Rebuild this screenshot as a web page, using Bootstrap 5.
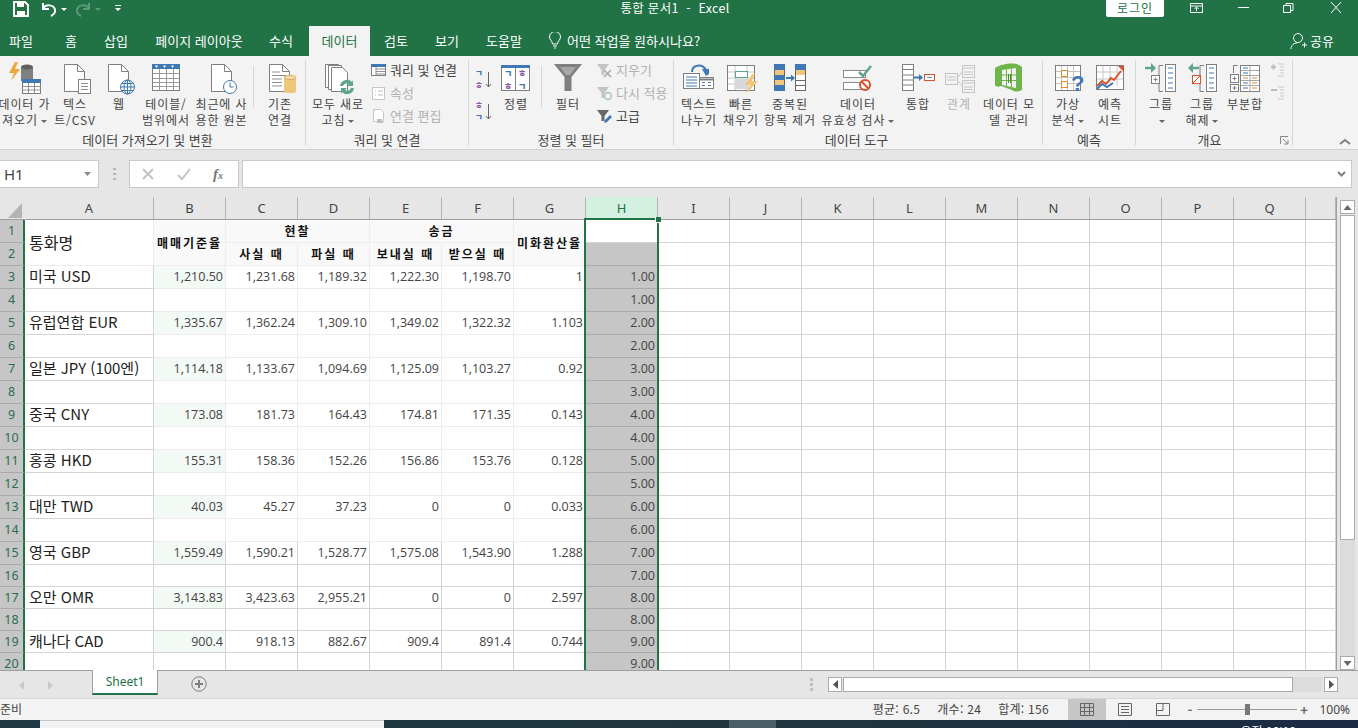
<!DOCTYPE html>
<html lang="ko">
<head>
    <meta charset="UTF-8">
    <meta name="viewport" content="width=device-width, initial-scale=1.0">
    <title>통합 문서1 - Excel</title>
    <link href="https://cdn.jsdelivr.net/npm/bootstrap@5.3.0/dist/css/bootstrap.min.css" rel="stylesheet">
    <style>
        html, body { height: 100%; }
        body { width: 1358px; height: 728px; overflow: hidden; background: #e6e6e6; color: #444; font-family: "Noto Sans CJK KR", "Noto Sans", sans-serif; font-size: 13px; }

        /* title bar + tabs */
        .xl-top { background: #217346; height: 56px; color: #fff; }
        .xl-title-row { height: 26px; display: grid; grid-template-columns: 400px 550px 1fr; }
        .xl-title { text-align: center; line-height: 16px; font-size: 12.5px; letter-spacing: .3px; }
        .xl-qat { display: flex; align-items: flex-start; padding: 1px 0 0 12px; gap: 0; }
        .q-gap { margin-left: 10px; }
        .xl-login { width: 58px; height: 17px; background: #fff; color: #217346; text-align: center; line-height: 15px; font-size: 12px; border-radius: 0 0 2px 2px; letter-spacing: 1px; margin-left: 156px; }
        .xl-win { display: flex; align-items: flex-start; }
        .xl-win svg { display: block; }
        .w-gap { margin-left: 10px; }
        .xl-tabs { display: flex; height: 30px; line-height: 30px; position: relative; }
        .xl-tab { text-align: center; white-space: nowrap; }
        .xl-tab.on { background: #f3f3f3; color: #217346; margin-left: 13px; }
        .xl-tell { display: flex; align-items: center; gap: 5px; margin-left: 12px; }
        .xl-share { margin-left: auto; margin-right: 24px; display: flex; align-items: center; gap: 2px; }
        .tw-30 { width: 30px; } .tw-32 { width: 32px; } .tw-42 { width: 42px; } .tw-50 { width: 50px; } .tw-52 { width: 52px; }
        .tw-58 { width: 58px; } .tw-61 { width: 61px; } .tw-64 { width: 64px; } .tw-134 { width: 134px; }

        /* ribbon */
        .xl-ribbon { height: 94px; background: #f3f3f3; border-bottom: 1px solid #d2d2d2; display: flex; padding-top: 4px; position: relative; }
        .rb-group { height: 85px; display: flex; flex-direction: column; border-right: 1px solid #d5d5d5; flex: none; position: relative; }
        .rb-body { height: 71px; display: flex; }
        .rb-label { height: 14px; line-height: 18px; text-align: center; color: #444; white-space: nowrap; }
        .rb-g1 { width: 306px; } .rb-g2 { width: 163px; padding-left: 6px; } .rb-g3 { width: 205px; padding-left: 6px; }
        .rb-g4 { width: 369px; padding-left: 3px; } .rb-g5 { width: 93px; padding-left: 3px; } .rb-g6 { width: 157px; padding-left: 5px; }
        .rb-g1 .rb-label { margin-right: 10px; }
        .rb-g2 .rb-label, .rb-g3 .rb-label, .rb-g4 .rb-label { margin-left: -6px; }
        .rb-g5 .rb-label { margin-left: -3px; }
        .rb-g6 .rb-label { margin-left: -5px; margin-right: 9px; }
        .rb-btn { flex: none; display: flex; flex-direction: column; align-items: center; text-align: center; font-size: 12px; letter-spacing: .9px; line-height: 16px; white-space: nowrap; }
        .rb-btn svg { display: block; flex: none; }
        .rb-off { color: #b1b1b1; }
        .bw-36 { width: 36px; } .bw-40 { width: 40px; } .bw-42 { width: 42px; } .bw-44 { width: 44px; } .bw-48 { width: 48px; } .bw-49 { width: 49px; }
        .bw-52 { width: 52px; } .bw-53 { width: 53px; } .bw-58 { width: 58px; } .bw-60 { width: 60px; } .bw-78 { width: 78px; }
        .rb-sep { width: 1px; height: 42px; background: #d5d5d5; margin: 6px 4px 0; flex: none; }
        .rb-sep-wide { margin: 6px 2px 0 5px; }
        .rb-small { display: flex; flex-direction: column; margin: -2px 0 0 6px; }
        .rb-small-row { height: 23px; display: flex; align-items: center; gap: 3px; white-space: nowrap; }
        .rb-small-row svg { flex: none; display: block; }
        .rb-caret { display: inline-block; width: 0; height: 0; border: 3px solid transparent; border-top-color: #666; border-bottom: 0; vertical-align: 2px; margin-left: 3px; }
        .rb-sort { width: 20px; display: flex; flex-direction: column; gap: 6px; padding-top: 5px; }
        .rb-sort svg { display: block; }
        .rb-outline { display: flex; flex-direction: column; gap: 7px; margin-left: 3px; padding-top: 2px; }
        .rb-launch { position: absolute; right: 3px; bottom: 0; }
        .rb-collapse { position: absolute; right: 7px; bottom: 3px; }

        /* formula bar */
        .xl-fbar { height: 47px; display: flex; padding-top: 10px; }
        .fb-box { height: 28px; background: #fff; border: 1px solid #c9c9c9; flex: none; display: flex; align-items: center; }
        .fb-name { width: 99px; padding: 0 6px 0 4px; justify-content: space-between; font-size: 15px; font-family: "Noto Sans", sans-serif; border-left: 0; }
        .fb-dots { width: 30px; flex: none; display: flex; justify-content: center; padding-top: 7px; }
        .fb-func { width: 110px; gap: 21px; padding-left: 11px; }
        .fb-fx { font-family: "Liberation Serif", serif; font-style: italic; font-weight: 700; font-size: 15px; color: #777; }
        .fb-fx sub { font-size: 10px; bottom: 0; }
        .fb-input { width: 1110px; margin-left: 3px; justify-content: flex-end; padding-right: 4px; }

        /* sheet */
        .xl-sheetrow { height: 473px; display: flex; }
        .xl-sheet { width: 1337px; height: 473px; overflow: hidden; position: relative; border-right: 1px solid #9e9e9e; flex: none; }
        .gridtbl { border-collapse: separate; border-spacing: 0; table-layout: fixed; width: 1336px; background: #fff; }
        .gridtbl th, .gridtbl td { padding: 0; line-height: 18px; border-right: 1px solid #d4d4d4; border-bottom: 1px solid #d4d4d4; overflow: hidden; white-space: nowrap; }
        .gridtbl tr { height: 23px; }
        .gridtbl tr.low { height: 22px; }
        .gridtbl thead th { background: #e6e6e6; font-weight: 400; text-align: center; font-size: 13px; font-family: "Noto Sans", sans-serif; border-right: 1px solid #b4b4b4; border-bottom: 1px solid #9e9e9e; color: #444; height: 23px; }
        .gridtbl thead th.sel { background: #d3f0e0; color: #217346; }
        .gridtbl thead th.corner { position: relative; border-right-color: #e6e6e6; }
        .rowh { background: #c6c6c6 !important; color: #2b6d50; text-align: center; font-weight: 400; font-size: 12.5px; border-right: 2px solid #217346 !important; border-bottom-color: #a9a9a9 !important; font-family: "Noto Sans", sans-serif; }
        .cell-a { font-size: 15px; padding: 0 0 2px 4px !important; color: #222; }
        .cell-a1 { font-size: 16px; }
        .cell-n { font-size: 12.5px; text-align: right; padding-right: 2px !important; color: #444; font-family: "Open Sans", "Noto Sans", sans-serif; }
        .cell-base { background: #f3f9f5; }
        .cell-lt { border-color: #ededed !important; }
        .cell-hd { background: #f9f9f9; font-weight: 700; font-size: 12px; color: #111; text-align: center; letter-spacing: 2px; border-color: #ededed !important; }
        .cell-h { background: #c6c6c6; border-color: #a9a9a9 !important; }
        .cell-h1 { background: #fff; }
        .sel-frame { position: absolute; left: 584px; top: 21px; width: 75px; height: 470px; border: 2px solid #217346; pointer-events: none; }
        .sel-grip { position: absolute; left: 655px; top: 20px; width: 6px; height: 6px; background: #217346; border: 1px solid #fff; border-top: 0; border-right: 0; }

        .xl-vbar { width: 15px; margin-left: 3px; display: flex; flex-direction: column; padding-top: 3px; flex: none; }
        .sb-btn { width: 15px; height: 14px; background: #fff; border: 1px solid #ababab; display: flex; align-items: center; justify-content: center; flex: none; }
        .sb-thumb { background: #fff; border: 1px solid #ababab; flex: none; }
        .xl-vbar .sb-thumb { height: 325px; margin-top: 1px; }
        .sb-track { background: #dcdcdc; flex: 1 1 auto; }

        /* tabs + status */
        .xl-sheettabs { height: 28px; border-top: 1px solid #9e9e9e; display: flex; align-items: flex-start; }
        .st-nav { width: 92px; flex: none; display: flex; gap: 22px; padding: 10px 0 0 19px; }
        .st-tab { width: 66px; height: 25px; margin-top: -1px; background: #fff; border: 1px solid #9e9e9e; border-top: 0; border-bottom: 2px solid #217346; color: #217346; text-align: center; line-height: 23px; font-family: "Noto Sans", sans-serif; font-size: 12px; flex: none; }
        .st-add { margin-left: 33px; margin-top: 5px; flex: none; }
        .st-right { margin-left: auto; display: flex; align-items: center; height: 28px; padding-bottom: 2px; }
        .st-grip { width: 3px; margin-right: 15px; display: flex; flex-direction: column; gap: 2px; }
        .st-grip i { display: block; width: 3px; height: 3px; background: #c0c0c0; }
        .h-bar { display: flex; width: 510px; height: 15px; margin-right: 20px; }
        .h-bar .sb-btn { width: 14px; height: 15px; }
        .h-bar .sb-thumb { width: 450px; height: 15px; margin-left: 1px; }
        .h-bar .sb-track { height: 15px; margin-right: 2px; }

        .xl-status { height: 22px; background: #f3f3f3; border-top: 1px solid #d6d6d6; display: flex; align-items: center; line-height: 20px; font-size: 12px; }
        .xl-ready { font-size: 12px; padding-bottom: 1px; }
        .xl-stats { margin-left: auto; display: flex; gap: 17px; letter-spacing: .3px; padding-bottom: 1px; }
        .vw-box { height: 21px; width: 38px; display: flex; align-items: center; justify-content: center; flex: none; }
        .vw-on { background: #c6c6c6; margin-left: 19px; }
        .zm { display: flex; align-items: center; margin-left: 4px; }
        .zm-line { width: 100px; height: 1px; background: #9a9a9a; position: relative; margin: 0 3px; }
        .zm-line i { position: absolute; left: 48px; top: -5px; width: 5px; height: 11px; background: #777; }
        .zm-sign { color: #666; font-weight: 700; width: 8px; text-align: center; font-size: 13px; }
        .zm-val { width: 50px; text-align: right; padding-right: 8px; font-family: "Noto Sans", sans-serif; }

        /* task bar */
        .xl-task { height: 8px; background: linear-gradient(90deg, #1f3a44, #20363f 55%, #1a2a44); display: flex; overflow: hidden; color: #fff; position: relative; }
        .tk-search { width: 344px; margin-left: 40px; background: #f2f2f2; border-top: 1px solid #c4c4c4; flex: none; }
        .tk-app { width: 47px; margin-left: 345px; background: #4a5f68; flex: none; }
        .tk-clock { margin-left: auto; margin-right: 62px; line-height: 20px; padding-top: 1px; font-size: 12px; }
    </style>
</head>
<body>
    <!-- title bar and ribbon tabs -->
    <div class="xl-top">
        <div class="xl-title-row">
            <div class="xl-qat">
                <svg width="18" height="16" viewBox="0 0 18 16"><path d="M2 1h11l3 3v11H2z" fill="none" stroke="#fff" stroke-width="2"/><rect x="5" y="1" width="7" height="5" fill="#fff"/><rect x="5" y="10" width="8" height="5" fill="#fff"/></svg>
                <svg class="q-gap" width="18" height="16" viewBox="0 0 18 16"><path d="M3 2v6h6M3 8c2-5 11-5 12 1 .4 3-2 5-4 6" fill="none" stroke="#fff" stroke-width="2"/></svg>
                <svg width="12" height="16" viewBox="0 0 12 16"><path d="M3 7h6l-3 3z" fill="#fff"/></svg>
                <svg class="ms-1" width="18" height="16" viewBox="0 0 18 16"><path d="M15 2v6H9M15 8C13 3 4 3 3 9c-.4 3 2 5 4 6" fill="none" stroke="#5c9a7c" stroke-width="2"/></svg>
                <svg width="12" height="16" viewBox="0 0 12 16"><path d="M3 7h6l-3 3z" fill="#5c9a7c"/></svg>
                <svg class="ms-2" width="12" height="16" viewBox="0 0 12 16"><path d="M3 4h6v1H3zM3 7h6L6 10z" fill="#fff"/></svg>
            </div>
            <div class="xl-title">통합 문서1 &nbsp;-&nbsp; Excel</div>
            <div class="xl-win">
                <div class="xl-login">로그인</div>
                <svg class="w-gap" width="47" height="16" viewBox="0 0 47 16"><path d="M16.500 3.500h12v9h-12zM17 6h11M22.500 11V7.500M20.500 9l2-2 2 2" fill="none" stroke="#fff"/></svg>
                <svg width="46" height="16" viewBox="0 0 46 16"><path d="M17 7.500h11" stroke="#fff"/></svg>
                <svg width="46" height="16" viewBox="0 0 46 16"><path d="M16.500 5.500h7v7h-7zM19 5V3.500h7v7h-2" fill="none" stroke="#fff"/></svg>
                <svg width="46" height="16" viewBox="0 0 46 16"><path d="M18 2l10 11M28 2L18 13" stroke="#fff" fill="none"/></svg>
            </div>
        </div>
        <div class="xl-tabs">
            <div class="xl-tab tw-42">파일</div>
            <div class="xl-tab tw-58">홈</div>
            <div class="xl-tab tw-32">삽입</div>
            <div class="xl-tab tw-134">페이지 레이아웃</div>
            <div class="xl-tab tw-30">수식</div>
            <div class="xl-tab tw-61 on">데이터</div>
            <div class="xl-tab tw-52">검토</div>
            <div class="xl-tab tw-50">보기</div>
            <div class="xl-tab tw-64">도움말</div>
            <div class="xl-tell">
                <svg width="14" height="18" viewBox="0 0 14 18"><path d="M4.500 12c0-3-3-4-3-7a5.500 5.500 0 0 1 11 0c0 3-3 4-3 7zM5 14h4M6 16h2" fill="none" stroke="#fff"/></svg>
                <span>어떤 작업을 원하시나요?</span>
            </div>
            <div class="xl-share">
                <svg width="18" height="18" viewBox="0 0 18 18"><circle cx="8" cy="6" r="4.500" fill="none" stroke="#fff"/><path d="M1 17c0-4 3-6 6-6M12 13h5M14.500 10.500v5" fill="none" stroke="#fff"/></svg>
                <span>공유</span>
            </div>
        </div>
    </div>

    <!-- ribbon -->
    <div class="xl-ribbon">
        <div class="rb-group rb-g1">
            <div class="rb-body">
                <div class="rb-btn bw-49">
                    <svg width="40" height="36" viewBox="0 0 40 36"><rect x="16" y="7" width="12" height="14" fill="#808080"/><ellipse cx="22" cy="7" rx="6" ry="2.500" fill="#5f5f5f"/><path d="M10 2 4 13h5l-3 8 9-12h-5l3-7z" fill="#f0a73c"/><rect x="17.500" y="19.500" width="18" height="14" fill="#fff" stroke="#7f7f7f"/><rect x="17" y="19" width="19" height="4" fill="#3f78b5"/><path d="M23.500 23v10M29.500 23v10M18 26.500h17M18 30h17" stroke="#8f8f8f"/></svg>
                    <div>데이터 가<br>져오기<i class="rb-caret"></i></div>
                </div>
                <div class="rb-btn bw-52">
                    <svg width="40" height="36" viewBox="0 0 40 36"><path d="M9.500 4.500h13l7 7v20h-20z" fill="#fff" stroke="#7f7f7f"/><path d="M22.500 4.500v7h7" fill="none" stroke="#7f7f7f"/><rect x="23.500" y="19.500" width="12" height="14" fill="#fff" stroke="#7f7f7f"/><path d="M26 23.500h7M26 26.500h7M26 29.500h7" stroke="#8f8f8f"/></svg>
                    <div>텍스<br>트/CSV</div>
                </div>
                <div class="rb-btn bw-36">
                    <svg width="40" height="36" viewBox="0 0 40 36"><path d="M9.500 4.500h13l7 7v20h-20z" fill="#fff" stroke="#7f7f7f"/><path d="M22.500 4.500v7h7" fill="none" stroke="#7f7f7f"/><circle cx="28.500" cy="27" r="7" fill="#fff" stroke="#3f78b5"/><path d="M21.500 27h14M28.500 20v14M23 23.500h11M23 30.500h11" stroke="#3f78b5" fill="none"/><ellipse cx="28.500" cy="27" rx="3.500" ry="7" fill="none" stroke="#3f78b5"/></svg>
                    <div>웹</div>
                </div>
                <div class="rb-btn bw-58">
                    <svg width="40" height="36" viewBox="0 0 40 36"><rect x="6.500" y="4.500" width="27" height="26" fill="#fff" stroke="#7f7f7f"/><rect x="6" y="4" width="28" height="5" fill="#3f78b5"/><path d="M9 5.500h3L10.500 8zM17 5.500h3L18.500 8zM25 5.500h3L26.500 8z" fill="#fff"/><path d="M13.500 9v21M20.500 9v21M27.500 9v21M7 13.500h26M7 18.500h26M7 22.500h26M7 26.500h26" stroke="#9a9a9a"/></svg>
                    <div>테이블/<br>범위에서</div>
                </div>
                <div class="rb-btn bw-53">
                    <svg width="40" height="36" viewBox="0 0 40 36"><path d="M9.500 4.500h13l7 7v20h-20z" fill="#fff" stroke="#7f7f7f"/><path d="M22.500 4.500v7h7" fill="none" stroke="#7f7f7f"/><circle cx="28" cy="27" r="6.500" fill="#fff" stroke="#3f78b5"/><path d="M28 22.500V27h3.500" fill="none" stroke="#3f78b5"/></svg>
                    <div>최근에 사<br>용한 원본</div>
                </div>
                <div class="rb-sep rb-sep-wide"></div>
                <div class="rb-btn bw-48">
                    <svg width="40" height="36" viewBox="0 0 40 36"><path d="M9.500 4.500h13l7 7v20h-20z" fill="#fff" stroke="#7f7f7f"/><path d="M22.500 4.500v7h7" fill="none" stroke="#7f7f7f"/><path d="M12 12h8M12 15.500h14M12 19h10M12 22.500h10M12 26h10" stroke="#8f8f8f"/><rect x="24" y="17" width="12" height="16" rx="2" fill="#efc77c"/><ellipse cx="30" cy="17.500" rx="6" ry="2" fill="#f6ddac" stroke="#d9ab5c"/></svg>
                    <div>기존<br>연결</div>
                </div>
            </div>
            <div class="rb-label">데이터 가져오기 및 변환</div>
        </div>

        <div class="rb-group rb-g2">
            <div class="rb-body">
                <div class="rb-btn bw-52">
                    <svg width="40" height="36" viewBox="0 0 40 36"><path d="M7.500 4.500h13v23h-13z" fill="#fff" stroke="#7f7f7f"/><path d="M10.500 5.500h13v24h-13z" fill="#fff" stroke="#7f7f7f"/><path d="M13.500 7.500h11l5 5v19h-16z" fill="#fff" stroke="#7f7f7f"/><path d="M22 26a7 7 0 0 1 12-4l1-2v6h-6l2-2a4 4 0 0 0-6 2zM36 28a7 7 0 0 1-12 4l-1 2v-6h6l-2 2a4 4 0 0 0 6-2z" fill="#5fa58a"/></svg>
                    <div>모두 새로<br>고침<i class="rb-caret"></i></div>
                </div>
                <div class="rb-small">
                    <div class="rb-small-row"><svg width="17" height="16" viewBox="0 0 17 16"><rect x="1.500" y="2.500" width="14" height="11" fill="#fff" stroke="#7f7f7f"/><rect x="1" y="2" width="15" height="3" fill="#3f78b5"/><path d="M6 7h9M6 9.500h9M6 12h9M6 5v8" stroke="#8f8f8f"/></svg><span>쿼리 및 연결</span></div>
                    <div class="rb-small-row rb-off"><svg width="17" height="16" viewBox="0 0 17 16"><rect x="2.500" y="2.500" width="12" height="12" fill="#fff" stroke="#c6c6c6"/><path d="M5 6h1M8 6h5M5 10h1M8 10h5" stroke="#bdbdbd"/></svg><span>속성</span></div>
                    <div class="rb-small-row rb-off"><svg width="17" height="16" viewBox="0 0 17 16"><path d="M3.500 1.500h7l3 3v9h-10z" fill="#fff" stroke="#c6c6c6"/><path d="M7 12h5M7 14h6" stroke="#bdbdbd" stroke-width="2"/></svg><span>연결 편집</span></div>
                </div>
            </div>
            <div class="rb-label">쿼리 및 연결</div>
        </div>

        <div class="rb-group rb-g3">
            <div class="rb-body">
                <div class="rb-sort">
                    <svg width="18" height="26" viewBox="0 0 18 26"><text font-size="8.500" font-weight="900" x="0" y="10.500" fill="#3f78b5">ㄱ</text><text font-size="8.500" font-weight="900" x="0" y="23" fill="#8a5aa8">ㅎ</text><path d="M13.500 7v15M11 19l2.500 3 2.500-3" fill="none" stroke="#666"/></svg>
                    <svg width="18" height="26" viewBox="0 0 18 26"><text font-size="8.500" font-weight="900" x="0" y="10.500" fill="#8a5aa8">ㅎ</text><text font-size="8.500" font-weight="900" x="0" y="23" fill="#3f78b5">ㄱ</text><path d="M13.500 7v15M11 19l2.500 3 2.500-3" fill="none" stroke="#666"/></svg>
                </div>
                <div class="rb-btn bw-42">
                    <svg width="40" height="36" viewBox="0 0 40 36"><rect x="5.500" y="5.500" width="28" height="25" fill="#fff" stroke="#7f7f7f"/><rect x="5" y="5" width="29" height="3" fill="#3f78b5"/><path d="M19.500 8v22" stroke="#7f7f7f"/><text font-size="9" font-weight="900" x="8" y="16.500" fill="#3f78b5">ㄱ</text><text font-size="9" font-weight="900" x="8" y="29.500" fill="#8a5aa8">ㅎ</text><text font-size="9" font-weight="900" x="22" y="16.500" fill="#8a5aa8">ㅎ</text><text font-size="9" font-weight="900" x="22" y="29.500" fill="#3f78b5">ㄱ</text></svg>
                    <div>정렬</div>
                </div>
                <div class="rb-sep"></div>
                <div class="rb-btn bw-44">
                    <svg width="40" height="36" viewBox="0 0 40 36"><path d="M6 4h28L23.500 17v14h-7V17z" fill="#7f7f7f"/><path d="M12 7h16l-6 8h-4z" fill="#a6a6a6"/></svg>
                    <div>필터</div>
                </div>
                <div class="rb-small">
                    <div class="rb-small-row rb-off"><svg width="17" height="16" viewBox="0 0 17 16"><path d="M1 2h12L8.500 8v5h-3V8z" fill="#c4c4c4"/><path d="M8 8l7 7M15 8l-7 7" stroke="#a8a8a8" stroke-width="1.500"/></svg><span>지우기</span></div>
                    <div class="rb-small-row rb-off"><svg width="17" height="16" viewBox="0 0 17 16"><path d="M1 2h12L8.500 8v5h-3V8z" fill="#c4c4c4"/><circle cx="12" cy="11" r="3.500" fill="none" stroke="#a8c8b8" stroke-width="1.500"/></svg><span>다시 적용</span></div>
                    <div class="rb-small-row"><svg width="17" height="16" viewBox="0 0 17 16"><path d="M1 2h12L8.500 8v5h-3V8z" fill="#666"/><path d="M8 15l1-3 5-5 2 2-5 5z" fill="#3f78b5"/></svg><span>고급</span></div>
                </div>
            </div>
            <div class="rb-label">정렬 및 필터</div>
        </div>

        <div class="rb-group rb-g4">
            <div class="rb-body">
                <div class="rb-btn bw-44">
                    <svg width="40" height="36" viewBox="0 0 40 36"><path d="M13 12c0-7 10-9 14-2" fill="none" stroke="#3f78b5" stroke-width="2"/><path d="M23 9h7v5l-3 2z" fill="#3f78b5"/><rect x="4.500" y="13.500" width="16" height="15" fill="#fff" stroke="#7f7f7f"/><path d="M7 17h11M7 20h11M7 23h11M7 26h11" stroke="#3f78b5"/><rect x="20.500" y="17.500" width="14" height="11" fill="#fff" stroke="#7f7f7f"/><path d="M20 19.500h15" stroke="#7f7f7f" stroke-width="2"/><path d="M23 22.500h3M29 22.500h3M23 25.500h3M29 25.500h3" stroke="#3f78b5"/></svg>
                    <div>텍스트<br>나누기</div>
                </div>
                <div class="rb-btn bw-40">
                    <svg width="40" height="36" viewBox="0 0 40 36"><rect x="6.500" y="5.500" width="27" height="25" fill="#fff" stroke="#7f7f7f"/><path d="M7 12h26M7 18h26M7 24h26M14 6v24M26 6v24" stroke="#c8c8c8"/><rect x="14.500" y="11.500" width="12" height="6" fill="#fff" stroke="#5fa58a"/><rect x="14" y="19" width="14" height="10" fill="#d8d8d8"/><path d="M31 14l-7 11h5l-4 9 12-13h-6l3-7z" fill="#f0c77c"/></svg>
                    <div>빠른<br>채우기</div>
                </div>
                <div class="rb-btn bw-58">
                    <svg width="40" height="36" viewBox="0 0 40 36"><rect x="4.500" y="4.500" width="10" height="26" fill="#fff" stroke="#666"/><rect x="4" y="4" width="11" height="6" fill="#3f78b5"/><rect x="5" y="10" width="9" height="5" fill="#efc77c"/><rect x="4" y="15" width="11" height="5" fill="#3f78b5"/><rect x="5" y="20" width="9" height="5" fill="#efc77c"/><rect x="4" y="25" width="11" height="6" fill="#3f78b5"/><path d="M16 18h6" stroke="#3f78b5" stroke-width="2"/><path d="M21 14.500l4 3.500-4 3.500z" fill="#3f78b5"/><rect x="25.500" y="4.500" width="10" height="26" fill="#fff" stroke="#666"/><rect x="25" y="4" width="11" height="6" fill="#3f78b5"/><rect x="26" y="10" width="9" height="5" fill="#efc77c"/><path d="M26 20.500h9M26 25.500h9" stroke="#666"/></svg>
                    <div>중복된<br>항목 제거</div>
                </div>
                <div class="rb-btn bw-78">
                    <svg width="40" height="36" viewBox="0 0 40 36"><rect x="5.500" y="10.500" width="22" height="7" fill="#fff" stroke="#8a8a8a"/><rect x="5.500" y="22.500" width="22" height="7" fill="#fff" stroke="#8a8a8a"/><path d="M21 12l4 4 8-10" fill="none" stroke="#5fa58a" stroke-width="2.500"/><circle cx="27" cy="25" r="5" fill="#fff" stroke="#d9512c" stroke-width="2"/><path d="M23.500 21.500l7 7" stroke="#d9512c" stroke-width="2"/></svg>
                    <div>데이터<br>유효성 검사<i class="rb-caret"></i></div>
                </div>
                <div class="rb-btn bw-42">
                    <svg width="40" height="36" viewBox="0 0 40 36"><rect x="4.500" y="4.500" width="11" height="26" fill="#fff" stroke="#7f7f7f"/><path d="M5 9.500h10M5 15h10M5 20h10M5 25h10" stroke="#7f7f7f"/><path d="M16 17.500h6" stroke="#3f78b5" stroke-width="2"/><path d="M21 14l4 3.500-4 3.500z" fill="#3f78b5"/><rect x="26.500" y="14.500" width="10" height="6" fill="#fff" stroke="#d9512c"/><path d="M29 17.500h5" stroke="#7f7f7f"/></svg>
                    <div>통합</div>
                </div>
                <div class="rb-btn bw-40 rb-off">
                    <svg width="40" height="36" viewBox="0 0 40 36"><rect x="6.500" y="13.500" width="12" height="11" fill="#f3f3f3" stroke="#c4c4c4"/><path d="M8 17h9M8 20h9" stroke="#c4c4c4"/><path d="M19 17l5-6M19 21l5 6" stroke="#c4c4c4"/><rect x="23.500" y="5.500" width="12" height="12" fill="#f3f3f3" stroke="#c4c4c4"/><rect x="23.500" y="20.500" width="12" height="12" fill="#f3f3f3" stroke="#c4c4c4"/><path d="M24 8h11M25 12h9M25 14.500h9M24 23h11M25 27h9M25 29.500h9" stroke="#c4c4c4"/></svg>
                    <div>관계</div>
                </div>
                <div class="rb-btn bw-60">
                    <svg width="40" height="36" viewBox="0 0 40 36"><path d="M6 8c6-4 19-6 24-3l3 2v23c-5 2-7 2-10 0L12 26c-3 1-5 1-6-1z" fill="#6fb54a"/><path d="M13 10l14-2v20l-14-3z" fill="#f3f3f3"/><path d="M17.500 9.500v17M22.500 9v18M13 15h14M13 20.500h14" stroke="#6fb54a"/><path d="M19.500 14v9M21.500 14v9" stroke="#4a8a3a"/></svg>
                    <div>데이터 모<br>델 관리</div>
                </div>
            </div>
            <div class="rb-label">데이터 도구</div>
        </div>

        <div class="rb-group rb-g5">
            <div class="rb-body">
                <div class="rb-btn bw-44">
                    <svg width="40" height="36" viewBox="0 0 40 36"><rect x="7.500" y="5.500" width="25" height="25" fill="#fff" stroke="#7f7f7f"/><path d="M13.500 6v24M19.500 6v24M25.500 6v24M8 11.500h24M8 17.500h24M8 23.500h24" stroke="#c4c4c4"/><rect x="13.500" y="10.500" width="6" height="6" fill="#fff" stroke="#e58a2e"/><rect x="13.500" y="21.500" width="6" height="6" fill="#fff" stroke="#e58a2e"/><text x="23" y="31" font-size="22" font-weight="700" font-family="Liberation Sans" fill="#3f78b5">?</text></svg>
                    <div>가상<br>분석<i class="rb-caret"></i></div>
                </div>
                <div class="rb-btn bw-40">
                    <svg width="40" height="36" viewBox="0 0 40 36"><rect x="6.500" y="5.500" width="27" height="24" fill="#fff" stroke="#7f7f7f"/><path d="M13 6v20M20 6v20M27 6v20M7 12h26M7 19h26" stroke="#c8c8c8"/><path d="M7 26l5-5 4 3 5-6 3 2 7-9" fill="none" stroke="#d9512c" stroke-width="2"/><path d="M28 6h6v6z" fill="#d9512c"/><path d="M7 29l5-5 5 3 6-4" fill="none" stroke="#3f78b5" stroke-width="2"/></svg>
                    <div>예측<br>시트</div>
                </div>
            </div>
            <div class="rb-label">예측</div>
        </div>

        <div class="rb-group rb-g6">
            <div class="rb-body">
                <div class="rb-btn bw-40">
                    <svg width="40" height="36" viewBox="0 0 40 36"><path d="M4 8h8" stroke="#5fa58a" stroke-width="2.500"/><path d="M10 3l5 5-5 5z" fill="#5fa58a"/><path d="M22 5.500h-4v26h4" fill="none" stroke="#7f7f7f"/><rect x="10.500" y="15.500" width="8" height="8" fill="#fff" stroke="#7f7f7f"/><path d="M12.500 19.500h4M14.500 17.500v4" stroke="#7f7f7f"/><rect x="24.500" y="4.500" width="10" height="27" fill="#fff" stroke="#7f7f7f"/><path d="M27 8h5M27 13h5M27 18h5M27 23h5M27 28h5" stroke="#3f78b5"/></svg>
                    <div>그룹<br><i class="rb-caret"></i></div>
                </div>
                <div class="rb-btn bw-42">
                    <svg width="40" height="36" viewBox="0 0 40 36"><path d="M9 8h8" stroke="#5fa58a" stroke-width="2.500"/><path d="M11 3L6 8l5 5z" fill="#5fa58a"/><path d="M22 5.500h-4v26h4" fill="none" stroke="#7f7f7f"/><rect x="10.500" y="15.500" width="8" height="8" fill="#fff" stroke="#d9512c"/><path d="M11 23l7-7" stroke="#d9512c"/><rect x="24.500" y="4.500" width="10" height="27" fill="#fff" stroke="#7f7f7f"/><path d="M27 8h5M27 13h5M27 18h5M27 23h5M27 28h5" stroke="#3f78b5"/></svg>
                    <div>그룹<br>해제<i class="rb-caret"></i></div>
                </div>
                <div class="rb-btn bw-44">
                    <svg width="40" height="36" viewBox="0 0 40 36"><path d="M8.500 13V5.500h4M8.500 24v7.500h4" fill="none" stroke="#7f7f7f"/><rect x="5.500" y="14.500" width="8" height="8" fill="#fff" stroke="#7f7f7f"/><path d="M7.500 18.500h4M9.500 16.500v4" stroke="#7f7f7f"/><rect x="5.500" y="24.500" width="8" height="7" fill="#fff" stroke="#7f7f7f"/><path d="M7.500 28h4M9.500 26v4" stroke="#7f7f7f"/><rect x="15.500" y="5.500" width="19" height="26" fill="#fff" stroke="#7f7f7f"/><path d="M25 6v25M16 10.500h18M16 15.500h18M16 20.500h18M16 25.500h18" stroke="#a8a8a8"/><path d="M18 8h5M18 13h5M18 23h5M18 28h5" stroke="#3f78b5"/><path d="M18 18h5M27 18h5M27 23h5M27 28h5" stroke="#e58a2e"/></svg>
                    <div>부분합</div>
                </div>
                <div class="rb-outline">
                    <svg width="15" height="16" viewBox="0 0 15 16"><path d="M1 5h5M3.500 2.500v5" stroke="#bdbdbd" stroke-width="2"/><path d="M8 2h6M10 5h4M10 8h4M10 11h4M8 14h6" stroke="#c9c9c9"/></svg>
                    <svg width="15" height="16" viewBox="0 0 15 16"><path d="M1 5h6" stroke="#bdbdbd" stroke-width="2"/><path d="M8 2h6M10 5h4M10 8h4M10 11h4M8 14h6" stroke="#c9c9c9"/></svg>
                </div>
            </div>
            <div class="rb-label">개요</div>
            <svg class="rb-launch" width="9" height="9" viewBox="0 0 9 9"><path d="M.5 8V.5H8M8 4v4H4M3 3l5 5" fill="none" stroke="#8a8a8a"/></svg>
        </div>
        <svg class="rb-collapse" width="12" height="8" viewBox="0 0 12 8"><path d="M1 6l5-4 5 4" fill="none" stroke="#7f7f7f" stroke-width="2"/></svg>
    </div>

    <!-- formula bar -->
    <div class="xl-fbar">
        <div class="fb-box fb-name"><span>H1</span><svg width="9" height="6" viewBox="0 0 9 6"><path d="M1 1h7L4.500 5z" fill="#8a8a8a"/></svg></div>
        <div class="fb-dots"><svg width="3" height="14" viewBox="0 0 3 14"><path d="M0 1h3v2H0zM0 6h3v2H0zM0 11h3v2H0z" fill="#b4b4b4"/></svg></div>
        <div class="fb-box fb-func">
            <svg width="14" height="14" viewBox="0 0 14 14"><path d="M2 2l10 10M12 2L2 12" stroke="#c4c4c4" stroke-width="2"/></svg>
            <svg width="16" height="14" viewBox="0 0 16 14"><path d="M2 8l4 4 8-10" fill="none" stroke="#c4c4c4" stroke-width="2"/></svg>
            <span class="fb-fx">f<sub>x</sub></span>
        </div>
        <div class="fb-box fb-input"><svg width="11" height="8" viewBox="0 0 11 8"><path d="M2 2l3.500 3.500L9 2" fill="none" stroke="#7f7f7f" stroke-width="2"/></svg></div>
    </div>

    <!-- sheet: the table is filled in by the script below -->
    <div class="xl-sheetrow">
        <div class="xl-sheet">
            <table class="gridtbl" id="sheetGrid"></table>
            <div class="sel-frame"></div>
            <div class="sel-grip"></div>
        </div>
        <div class="xl-vbar">
            <div class="sb-btn"><svg width="9" height="5" viewBox="0 0 9 5"><path d="M.5 5h8L4.500 0z" fill="#666"/></svg></div>
            <div class="sb-thumb"></div>
            <div class="sb-track"></div>
            <div class="sb-btn"><svg width="9" height="5" viewBox="0 0 9 5"><path d="M.5 0h8L4.500 5z" fill="#666"/></svg></div>
        </div>
    </div>

    <!-- sheet tabs -->
    <div class="xl-sheettabs">
        <div class="st-nav">
            <svg width="6" height="9" viewBox="0 0 6 9"><path d="M5 0v9L0 4.500z" fill="#c9c9c9"/></svg>
            <svg width="6" height="9" viewBox="0 0 6 9"><path d="M1 0v9l5-4.500z" fill="#c9c9c9"/></svg>
        </div>
        <div class="st-tab">Sheet1</div>
        <svg class="st-add" width="16" height="16" viewBox="0 0 16 16"><circle cx="8" cy="8" r="7.200" fill="none" stroke="#7f7f7f"/><path d="M8 4v8M4 8h8" stroke="#7f7f7f" stroke-width="2"/></svg>
        <div class="st-right">
            <div class="st-grip"><i></i><i></i><i></i></div>
            <div class="h-bar">
                <div class="sb-btn"><svg width="5" height="9" viewBox="0 0 5 9"><path d="M5 0v9L0 4.500z" fill="#555"/></svg></div>
                <div class="sb-thumb"></div>
                <div class="sb-track"></div>
                <div class="sb-btn"><svg width="5" height="9" viewBox="0 0 5 9"><path d="M0 0v9l5-4.500z" fill="#555"/></svg></div>
            </div>
        </div>
    </div>

    <!-- status bar -->
    <div class="xl-status">
        <div class="xl-ready">준비</div>
        <div class="xl-stats"><span>평균: 6.5</span><span>개수: 24</span><span>합계: 156</span></div>
        <div class="vw-box vw-on"><svg width="14" height="13" viewBox="0 0 14 13"><path d="M.5.500h13v12H.5zM.5 4.500h13M.5 8.500h13M4.500.500v12M9.500.500v12" fill="none" stroke="#666"/></svg></div>
        <div class="vw-box"><svg width="14" height="13" viewBox="0 0 14 13"><path d="M.5.500h13v12H.5z" fill="none" stroke="#666"/><path d="M3 3.500h8M3 6.500h8M3 9.500h8" stroke="#666"/></svg></div>
        <div class="vw-box"><svg width="14" height="13" viewBox="0 0 14 13"><path d="M.5.500h13v12H.5zM.5 7.500h6.500V.500" fill="none" stroke="#666"/></svg></div>
        <div class="zm">
            <span class="zm-sign">-</span>
            <div class="zm-line"><i></i></div>
            <span class="zm-sign">+</span>
            <span class="zm-val">100%</span>
        </div>
    </div>

    <!-- windows task bar, mostly cut off -->
    <div class="xl-task">
        <div class="tk-search"></div>
        <div class="tk-app"></div>
        <div class="tk-clock">오전 10:10</div>
    </div>

    <script src="https://cdn.jsdelivr.net/npm/bootstrap@5.3.0/dist/js/bootstrap.bundle.min.js"></script>
    <script>
        // Exchange rate rows: name, base, buy, sell, send, receive, usd rate
        const rates = [
            ['미국 USD', '1,210.50', '1,231.68', '1,189.32', '1,222.30', '1,198.70', '1'],
            ['유럽연합 EUR', '1,335.67', '1,362.24', '1,309.10', '1,349.02', '1,322.32', '1.103'],
            ['일본 JPY (100엔)', '1,114.18', '1,133.67', '1,094.69', '1,125.09', '1,103.27', '0.92'],
            ['중국 CNY', '173.08', '181.73', '164.43', '174.81', '171.35', '0.143'],
            ['홍콩 HKD', '155.31', '158.36', '152.26', '156.86', '153.76', '0.128'],
            ['대만 TWD', '40.03', '45.27', '37.23', '0', '0', '0.033'],
            ['영국 GBP', '1,559.49', '1,590.21', '1,528.77', '1,575.08', '1,543.90', '1.288'],
            ['오만 OMR', '3,143.83', '3,423.63', '2,955.21', '0', '0', '2.597'],
            ['캐나다 CAD', '900.4', '918.13', '882.67', '909.4', '891.4', '0.744']
        ];
        const letters = 'ABCDEFGHIJKLMNOPQ'.split('');

        function blanks(n) {
            return '<td></td>'.repeat(n);
        }

        function renderGrid() {
            let html = '<colgroup><col style="width:25px"><col style="width:129px">';
            html += '<col style="width:72px">'.repeat(16) + '<col style="width:30px"></colgroup>';

            // column letters
            html += '<thead><tr><th class="corner"><svg width="22" height="22" viewBox="0 0 22 22" class="d-block"><path d="M22 6v15H8z" fill="#b4b4b4"/></svg></th>';
            letters.forEach(l => { html += `<th class="${l === 'H' ? 'sel' : ''}">${l}</th>`; });
            html += '<th></th></tr></thead><tbody>';

            // the two merged header rows
            html += `<tr><th class="rowh">1</th>
                <td rowspan="2" class="cell-a cell-a1 cell-lt">통화명</td>
                <td rowspan="2" class="cell-hd">매매기준율</td>
                <td colspan="2" class="cell-hd">현찰</td>
                <td colspan="2" class="cell-hd">송금</td>
                <td rowspan="2" class="cell-hd">미화환산율</td>
                <td class="cell-h1"></td>${blanks(10)}</tr>`;
            html += `<tr><th class="rowh">2</th>
                <td class="cell-hd">사실 때</td><td class="cell-hd">파실 때</td>
                <td class="cell-hd">보내실 때</td><td class="cell-hd">받으실 때</td>
                <td class="cell-h"></td>${blanks(10)}</tr>`;

            // data rows, each followed by an empty row
            rates.forEach((r, i) => {
                const value = (i + 1).toFixed(2);
                const first = 3 + i * 2;
                const lt = first < 15 ? ' cell-lt' : '';
                const low = first >= 16 ? ' class="low"' : '';
                html += `<tr${low}><th class="rowh">${first}</th><td class="cell-a">${r[0]}</td>`;
                r.slice(1).forEach((v, k) => {
                    html += `<td class="cell-n${k === 0 ? ' cell-base' : ''}${lt}">${v}</td>`;
                });
                html += `<td class="cell-n cell-h">${value}</td>${blanks(10)}</tr>`;
                const next = first + 1;
                const nextLt = next < 15 ? ' class="cell-lt"' : '';
                html += `<tr${next >= 16 ? ' class="low"' : ''}><th class="rowh">${next}</th><td></td>`;
                html += `<td${nextLt}></td>`.repeat(6);
                html += `<td class="cell-n cell-h">${value}</td>${blanks(10)}</tr>`;
            });
            html += '</tbody>';
            document.getElementById('sheetGrid').innerHTML = html;
        }

        document.addEventListener('DOMContentLoaded', renderGrid);
    </script>
</body>
</html>
